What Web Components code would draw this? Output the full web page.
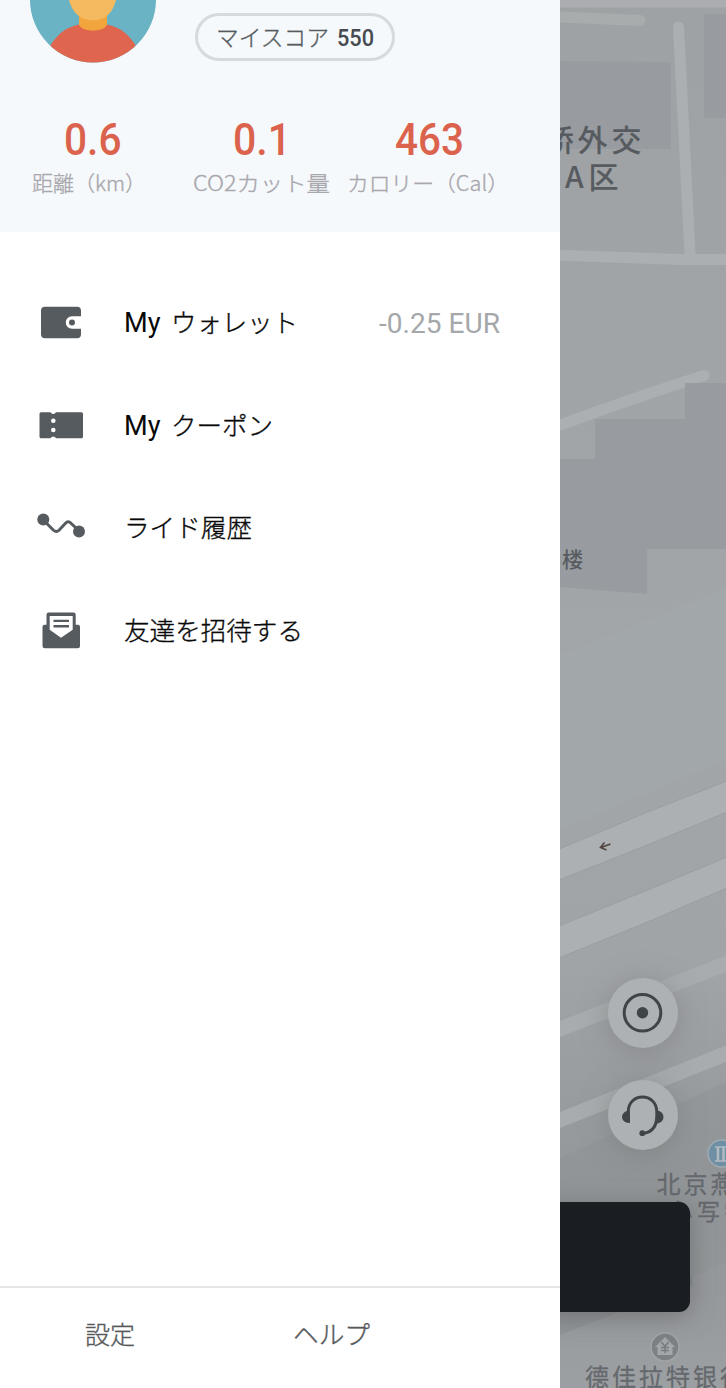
<!DOCTYPE html>
<html lang="ja">
<head>
<meta charset="utf-8">
<title>マイページ</title>
<style>
html,body{margin:0;height:1388px;overflow:hidden;background:#fff;font-family:"Noto Sans CJK JP",sans-serif}
</style>
</head>
<body>
<app-screen></app-screen>
<script>
const define = (name, html, setup) => customElements.define(name, class extends HTMLElement {
  connectedCallback() {
    if (this.shadowRoot) return;
    const root = this.attachShadow({ mode: "open" });
    const t = document.createElement("template");
    t.innerHTML = html;
    root.append(t.content.cloneNode(true));
    if (setup) setup(this, root);
  }
});

// One line of text, fitted to the width given by "w"; "b" is the baseline inside height "h".
define("fit-text", `<style>:host{display:block;flex:none}svg{display:block;overflow:visible}</style><svg><text></text></svg>`, (el, root) => {
  const a = n => el.getAttribute(n);
  const svg = root.querySelector("svg"), text = root.querySelector("text");
  svg.setAttribute("width", a("w"));
  svg.setAttribute("height", a("h"));
  text.setAttribute("y", a("b"));
  text.setAttribute("textLength", a("w"));
  text.setAttribute("lengthAdjust", "spacingAndGlyphs");
  text.setAttribute("font-size", a("size"));
  text.setAttribute("font-family", a("font") ? a("font") + ", 'Noto Sans CJK JP', sans-serif" : "'Noto Sans CJK JP', sans-serif");
  text.setAttribute("font-weight", a("weight") || "400");
  text.setAttribute("fill", "currentColor");
  if (a("weight") === "300") {
    text.setAttribute("stroke", "currentColor");
    text.setAttribute("stroke-width", ".35");
  }
  text.textContent = a("text");
});

define("user-avatar", `<style>:host{display:block;width:126px;height:63px}svg{display:block}</style>
<svg width="126" height="63" viewBox="30 0 126 63"><defs><clipPath id="c"><circle cx="93" cy="-.5" r="63"/></clipPath></defs>
<g clip-path="url(#c)"><rect x="30" width="126" height="63" fill="#69b3c5"/>
<path d="M79 24.500C66 27 56 35 49 48V64H137V48C130 35 120 27 107 24.500Z" fill="#df654e"/>
<path d="M79 12V25C83 32.500 103 32.500 107 25V12Z" fill="#f2a43d"/>
<path d="M69 0C72 12 80 20.500 93 20.500S113 12 116 0Z" fill="#f5b95f"/></g></svg>`);

define("score-pill", `<style>:host{display:flex;box-sizing:border-box;width:200px;height:48px;border:3px solid #d6dadd;border-radius:24px;padding-left:18px;gap:8px;color:#555b60;align-items:flex-start}.n{color:#454b50}</style>
<fit-text w="113" h="42" b="30" size="23" weight="300" text="マイスコア"></fit-text>
<fit-text class="n" w="37" h="42" b="30" size="24" weight="500" font="Roboto" text="550"></fit-text>`);

define("stat-item", `<style>:host{display:flex;flex-direction:column;flex:none}.n{color:#db634e;align-self:center}.l{color:#a8a7ad}</style><div class="n"></div><div class="l"></div>`, (el, root) => {
  const a = n => el.getAttribute(n);
  root.querySelector(".n").innerHTML = `<fit-text h="48" b="39" size="43.500" weight="500" font="Roboto" text="${a("value")}" w="${a("vw")}"></fit-text>`;
  root.querySelector(".l").innerHTML = `<fit-text h="34" b="26.500" size="21" weight="300" text="${a("label")}" w="${a("lw")}"></fit-text>`;
});

define("profile-head", `<style>:host{display:block;height:232px;background:#f6f9fb}
.top{display:flex;height:113px;padding-left:30px}score-pill{margin:13px 0 0 39px}
.stats{display:flex;padding:3px 0 0 32px}stat-item{width:121px}.a{margin-right:40px}stat-item.b{width:137px}.b{margin-right:17px}stat-item.c{width:165px}</style>
<div class="top"><user-avatar></user-avatar><score-pill></score-pill></div>
<div class="stats"><stat-item class="a" value="0.6" vw="57.500" label="距離（km）" lw="114"></stat-item><stat-item class="b" value="0.1" vw="58" label="CO2カット量" lw="137"></stat-item><stat-item class="c" value="463" vw="69" label="カロリー（Cal）" lw="162"></stat-item></div>`);

const icons = {
  wallet: `<path fill-rule="evenodd" d="M45 307H77Q81 307 81 311V316.500H72A6 6 0 0 0 72 329H81V334.500Q81 338.500 77 338.500H45Q41 338.500 41 334.500V311Q41 307 45 307Z"/><circle cx="72" cy="322.700" r="3"/>`,
  coupon: `<path d="M41 412H50.500A3 3 0 0 0 56 412H81.500Q83 412 83 413.500V436.500Q83 438 81.500 438H56A3 3 0 0 0 50.500 438H41Q39.500 438 39.500 436.500V413.500Q39.500 412 41 412Z"/><circle cx="53.300" cy="420.500" r="2.300" fill="#fff"/><circle cx="53.300" cy="429.700" r="2.300" fill="#fff"/>`,
  ride: `<circle cx="43.300" cy="519.800" r="6"/><circle cx="79" cy="531.700" r="6"/><path d="M43 520L53.500 530.500Q56.300 533 59 530.500L65.500 523.500Q68.200 520.500 71 523.500L79 531" fill="none" stroke="#565b60" stroke-width="3"/>`,
  invite: `<path d="M44.500 624.500H46.500V614.500Q46.500 612.300 48.700 612.300H73.500Q75.700 612.300 75.700 614.500V624.500H78Q80 624.500 80 626.500V645.500Q80 648 77.500 648H45Q42.500 648 42.500 645.500V626.500Q42.500 624.500 44.500 624.500Z"/><path d="M49.700 615.700H72.700V629.500L61 637.500L49.700 629.500Z" fill="#fff"/><path d="M53.500 620.700H69M53.500 626H69" stroke="#565b60" stroke-width="2.300"/>`
};
define("menu-row", `<style>:host{display:flex;height:102.500px;align-items:center;padding-left:30px;color:#090909}
svg{display:block;flex:none;fill:#565b60;margin-right:32px}.t{display:flex;gap:10px}::slotted(*){margin-left:auto;color:#a5a7a9}</style>
<svg width="62" height="60"></svg><div class="t"></div><slot></slot>`, (el, root) => {
  const svg = root.querySelector("svg");
  svg.setAttribute("viewBox", `30 ${el.getAttribute("mid") - 30} 62 60`);
  svg.innerHTML = icons[el.getAttribute("icon")];
  root.querySelector(".t").innerHTML = (el.hasAttribute("my") ? `<fit-text text="My" font="Roboto" size="27" w="36.500" h="40" b="29"></fit-text>` : "") +
    `<fit-text text="${el.getAttribute("label")}" size="25.500" weight="300" w="${el.getAttribute("w")}" h="40" b="28.500"></fit-text>`;
});

define("drawer-foot", `<style>:host{display:flex;height:100px;border-top:2px solid #e5e6e7;color:#57595c;padding-left:85px;gap:158px}</style>
<fit-text text="設定" size="24.500" weight="300" w="50" h="90" b="56"></fit-text><fit-text text="ヘルプ" size="25.500" weight="300" w="77" h="90" b="56"></fit-text>`);

define("side-drawer", `<style>:host{display:flex;flex-direction:column;width:560px;flex:none;background:#fff}.menu{flex:1;padding-top:40px}.amt{margin-right:60px}</style>
<profile-head></profile-head>
<div class="menu"><menu-row icon="wallet" mid="323.250" my label="ウォレット" w="127"><fit-text class="amt" text="-0.25 EUR" font="Roboto" size="27" w="121" h="40" b="29.500"></fit-text></menu-row>
<menu-row icon="coupon" mid="425.750" my label="クーポン" w="102"></menu-row>
<menu-row icon="ride" mid="528.250" label="ライド履歴" w="128"></menu-row>
<menu-row icon="invite" mid="630.750" label="友達を招待する" w="179"></menu-row></div>
<drawer-foot></drawer-foot>`);

define("map-button", `<style>:host{display:block;width:70px;height:70px;border-radius:50%;background:#adb1b3;box-shadow:0 4px 28px #7778}svg{display:block}</style><svg width="70" height="70" fill="none" stroke="#3f4447" stroke-width="3"></svg>`, (el, root) => {
  root.querySelector("svg").innerHTML = el.getAttribute("kind") === "locate"
    ? `<circle cx="34.500" cy="34.800" r="18.300"/><circle cx="34.500" cy="34.800" r="5.700" fill="#3f4447" stroke="none"/>`
    : `<path d="M20.200 41V32C20.200 12 48.800 12 48.800 32V36C48.800 47 43.500 52.500 34.500 53.500"/><path d="M22 30.500V43C11.500 43.500 11.500 30.500 22 30.500ZM48 30.500V43.500C58 43.500 58 30.500 48 30.500Z" fill="#3f4447" stroke="none"/><circle cx="34.300" cy="53.200" r="2.900" fill="#3f4447" stroke="none"/>`;
});

define("map-view", `<style>:host{display:block;position:relative;width:166px;height:1388px;overflow:hidden;background:#9fa2a4}
.map{display:block}map-button,.card{position:absolute;left:48px}.l{top:978px}.h{top:1080px}
.card{left:-20px;top:1202px;width:150px;height:110px;border-radius:11px;background:#1a1d22;box-shadow:0 4px 24px #5558}</style>
<svg class="map" width="166" height="1388" viewBox="560 0 166 1388" font-family="'Noto Sans CJK SC', sans-serif">
<defs><linearGradient id="g" x2="0" y2="1"><stop stop-color="#9fa2a4"/><stop offset=".5" stop-color="#a2a6a8"/><stop offset=".7" stop-color="#a1a4a7"/><stop offset=".84" stop-color="#94989b"/><stop offset=".93" stop-color="#96999c"/><stop offset="1" stop-color="#9da0a2"/></linearGradient></defs>
<rect x="560" width="166" height="1388" fill="url(#g)"/>
<g fill="#989ca0"><path d="M560 61L671 62V149H560ZM704 14H726V118H704ZM726 383H685V419H595V459H560V587L647 594V549H726Z"/></g>
<path d="M560 655L726 588V760L560 830Z" fill="#a2a7a9"/>
<g stroke="#abafb1" fill="none">
<path d="M560 3H726" stroke-width="9" stroke="#acadb0"/><path d="M560 17L640 20.500" stroke-width="11" stroke-linecap="round" stroke="#a9acac"/>
<path d="M678.500 27L690 254" stroke-width="11" stroke-linecap="round"/><path d="M555 255L680 259.500H730" stroke-width="11"/>
<path d="M555 427Q630 399 704 375.500" stroke-width="11" stroke-linecap="round"/></g>
<path d="M685 383H726V395H685Z" fill="#989ca0"/>
<g stroke="#9a9ea0" fill="#acb0b2"><path d="M559 849L650 811L727 781V812L650 844L559 880Z"/><path d="M559 926L650 889L727 857V888L650 921L559 958Z"/></g>
<g stroke="#a8acae" stroke-width="15" fill="none"><path d="M555 1031L730 962"/><path d="M555 1122L730 1052"/></g>
<path d="M560 1158L726 1082V1262L690 1278V1205H560Z" fill="#8e9295" opacity=".45"/>
<path d="M560 1335L650 1300H560Z" fill="#888c8f" opacity=".5"/>
<path d="M610.500 844L601 847.500M604.500 842.500L600.500 847.500L606.500 850" stroke="#51443f" stroke-width="1.600" fill="none"/>
<g fill="#575b60" font-weight="500"><g font-size="30"><text x="544 577.500 611.500" y="150.500">桥外交</text><text x="565 588.500" y="187.500">A区</text></g>
<text x="562" y="567" font-size="21">楼</text></g>
<g fill="#65696e" stroke="#65696e" stroke-width=".3"><text x="656.500 683.500 710.500" y="1193" font-size="24">北京燕</text><text x="669 697 724" y="1220" font-size="23">心写字</text><text x="585 612 639 666 693 720" y="1386" font-size="24">德佳拉特银行</text></g>
<circle cx="721.500" cy="1153.500" r="13.500" fill="#6e8fa4" stroke="#a0abb1" stroke-width="1.500"/><path d="M715 1147H728M715 1161H728" stroke="#b1bbc0" stroke-width="1.500"/><path d="M718 1147V1161M723.500 1147V1161" stroke="#b1bbc0" stroke-width="2.500"/>
<circle cx="665" cy="1347" r="14" fill="#7d8185" stroke="#a2a5a7" stroke-width="1.500"/><path d="M665 1337L675 1347H672.500V1355H657.500V1347H655Z" fill="#a4a7a9"/><path d="M661.500 1342L665 1346.500L668.500 1342M665 1346V1353M661 1347.500H669M661 1350.500H669" stroke="#777b80" stroke-width="1.500" fill="none"/>
<circle cx="684" cy="1282" r="8" fill="#85898d"/>
</svg><map-button class="l" kind="locate"></map-button><map-button class="h" kind="help"></map-button><div class="card"></div>`);

define("app-screen", `<style>:host{display:flex;width:726px;height:1388px;overflow:hidden}</style><side-drawer></side-drawer><map-view></map-view>`);
</script>
</body>
</html>
